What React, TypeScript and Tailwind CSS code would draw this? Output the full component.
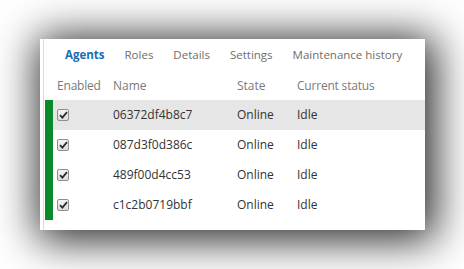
import React from "react";

const tabs = ["Agents", "Roles", "Details", "Settings", "Maintenance history"];

const agents = [
  { name: "06372df4b8c7", state: "Online", status: "Idle", selected: true },
  { name: "087d3f0d386c", state: "Online", status: "Idle" },
  { name: "489f00d4cc53", state: "Online", status: "Idle" },
  { name: "c1c2b0719bbf", state: "Online", status: "Idle" },
];

function Check() {
  return (
    <span className="flex h-[12px] w-[12px] items-center justify-center rounded-[2px] border border-[#8f8f8f] bg-gradient-to-b from-[#f4f4f4] to-[#dcdcdc]">
      <svg width="9" height="8" viewBox="0 0 9 8">
        <path d="M1 4.2 L3.4 6.6 L8 1.2" fill="none" stroke="#2d2d2d" strokeWidth="1.8" />
      </svg>
    </span>
  );
}

export default function App() {
  return (
    <div className="h-[269px] w-[464px] overflow-hidden bg-white pl-[40px] pt-[39px] font-['Open_Sans',sans-serif]">
      <div className="h-[191px] w-[385px] bg-white pl-[3px] shadow-[4px_4px_40px_6px_rgba(0,0,0,0.85)]">
        <div className="h-full border-l border-[#dcdcdc] pl-[1px]">
          {/* tabs */}
          <div className="flex h-[31px] items-center gap-[20px] pl-[20px] pt-[1px] text-[11.5px] text-[#6e6e6e]">
            {tabs.map((t, i) => (
              <span key={t} className={i === 0 ? "font-bold text-[#1b6db3]" : ""}>
                {t}
              </span>
            ))}
          </div>

          {/* header */}
          <div className="flex h-[30px] items-center pt-[2px] text-[12px] text-[#7a7a7a]">
            <span className="w-[68px] pl-[12px] tracking-[-0.2px]">Enabled</span>
            <span className="w-[124px]">Name</span>
            <span className="w-[60px]">State</span>
            <span className="tracking-[-0.2px]">Current status</span>
          </div>

          {/* rows */}
          <div className="flex">
            <div className="w-[8px] bg-[#0b8a2a]" />
            <div className="flex-1">
              {agents.map((a) => (
                <div
                  key={a.name}
                  className={`flex h-[30px] items-center text-[12px] text-[#333] ${a.selected ? "bg-[#e6e6e6]" : ""}`}
                >
                  <span className="w-[60px] pl-[4px]">
                    <Check />
                  </span>
                  <span className="w-[124px]">{a.name}</span>
                  <span className="w-[60px]">{a.state}</span>
                  <span>{a.status}</span>
                </div>
              ))}
            </div>
          </div>
        </div>
      </div>
    </div>
  );
}
